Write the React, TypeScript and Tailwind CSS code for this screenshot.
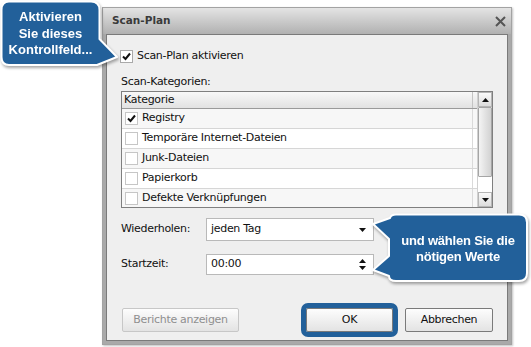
import React from 'react';

const ui = { fontFamily: '"DejaVu Sans", Verdana, sans-serif' };
const tip = { fontFamily: '"Liberation Sans", Arial, sans-serif' };
const blue = '#22609a';

const Check = ({ checked = false, className = '' }: { checked?: boolean; className?: string }) => (
  <div className={`flex h-[13px] w-[13px] shrink-0 items-center justify-center border border-[#a9a9a9] bg-white ${className}`}>
    {checked && (
      <svg width="9" height="9" viewBox="0 0 9 9">
        <path d="M1 4.5 L3.5 7 L8 1.5" fill="none" stroke="#111" strokeWidth="2" />
      </svg>
    )}
  </div>
);

const Arrow = ({ up = false }: { up?: boolean }) => (
  <svg width="7" height="4" viewBox="0 0 7 4">
    <path d={up ? 'M0 4 L3.5 0 L7 4 Z' : 'M0 0 L7 0 L3.5 4 Z'} fill="#111" />
  </svg>
);

const categories = [
  { name: 'Registry', checked: true },
  { name: 'Temporäre Internet-Dateien', checked: false },
  { name: 'Junk-Dateien', checked: false },
  { name: 'Papierkorb', checked: false },
  { name: 'Defekte Verknüpfungen', checked: false },
];

const Button = ({ children, disabled = false, className = '' }: { children: React.ReactNode; disabled?: boolean; className?: string }) => (
  <div
    className={`flex h-[24px] items-center justify-center rounded-[2px] border bg-gradient-to-b from-[#fdfdfd] to-[#e3e3e3] text-[11px] ${
      disabled ? 'border-[#c7c7c7] text-[#8f8f8f]' : 'border-[#7a7a7a] text-[#111]'
    } ${className}`}
  >
    {children}
  </div>
);

export default function App() {
  return (
    <div className="relative h-[347px] w-[531px] overflow-hidden bg-white" style={ui}>
      <div className="ml-[102px] pt-[7px]">
        <div className="flex h-[338px] w-[410px] flex-col border border-[#a3a3a3] bg-[#a9a9a9] shadow-[1px_1px_2px_rgba(0,0,0,0.25)]">
          {/* title bar */}
          <div className="flex h-[26px] items-center justify-between bg-gradient-to-b from-[#e4e4e4] to-[#b1b1b1] pl-[9px] pr-[5px]">
            <span className="text-[10.5px] font-bold text-[#3a3a3a]">Scan-Plan</span>
            <svg width="11" height="11" viewBox="0 0 11 11">
              <path d="M1 1 L10 10 M10 1 L1 10" stroke="#555" strokeWidth="2" />
            </svg>
          </div>

          {/* content */}
          <div className="mx-[3px] mb-[3px] flex flex-1 flex-col border border-[#7a7a7a] bg-[#efefef] pl-[13px] pr-[14px] text-[11px] tracking-[-0.3px] text-[#111]">
            <div className="mt-[15px] flex h-[13px] items-center gap-[4px]">
              <Check checked />
              <span>Scan-Plan aktivieren</span>
            </div>

            <div className="mt-[12px] h-[13px] pl-[1px] leading-[13px]">Scan-Kategorien:</div>

            {/* list */}
            <div className="ml-[1px] mt-[3px] flex h-[117px] w-[372px] border border-[#7f7f7f] bg-white">
              <div className="flex flex-1 flex-col overflow-hidden">
                <div className="flex h-[17px] shrink-0 border-b border-[#9a9a9a] bg-gradient-to-b from-[#f8f8f8] to-[#e2e2e2]">
                  <div className="flex flex-1 items-center border-r border-[#c4c4c4] pl-[2px]">Kategorie</div>
                  <div className="w-[4px]" />
                </div>
                {categories.map((c, i) => (
                  <div
                    key={c.name}
                    className={`flex h-[20px] shrink-0 border-b border-[#d6d6d6] ${i % 2 === 0 ? 'bg-[#f7f7f7]' : 'bg-white'}`}
                  >
                    <div className="flex flex-1 items-center gap-[4px] border-r border-[#dadada] pl-[3px]">
                      <Check checked={c.checked} className="border-[#c6c6c6]" />
                      <span>{c.name}</span>
                    </div>
                    <div className="w-[4px]" />
                  </div>
                ))}
              </div>
              {/* scrollbar */}
              <div className="flex w-[15px] flex-col border-l border-[#d0d0d0] bg-white">
                <div className="flex h-[15px] items-center justify-center border border-[#b5b5b5] bg-gradient-to-b from-[#fafafa] to-[#dcdcdc]">
                  <Arrow up />
                </div>
                <div className="h-[70px] rounded-[1px] border border-[#a5a5a5] bg-gradient-to-r from-[#f4f4f4] to-[#d2d2d2]" />
                <div className="flex-1 bg-white" />
                <div className="flex h-[15px] items-center justify-center border border-[#b5b5b5] bg-gradient-to-b from-[#fafafa] to-[#dcdcdc]">
                  <Arrow />
                </div>
              </div>
            </div>

            <div className="mt-[10px] flex h-[23px] items-center pl-[1px]">
              <span className="w-[85px]">Wiederholen:</span>
              <div className="flex h-[23px] w-[168px] items-center justify-between border border-[#b9b9b9] bg-white pl-[4px] pr-[7px]">
                <span>jeden Tag</span>
                <Arrow />
              </div>
            </div>

            <div className="mt-[13px] flex h-[21px] items-center pl-[1px]">
              <span className="w-[85px]">Startzeit:</span>
              <div className="flex h-[21px] w-[168px] items-center justify-between border border-[#b9b9b9] bg-white pl-[4px] pr-[7px]">
                <span>00:00</span>
                <div className="flex flex-col gap-[3px]">
                  <Arrow up />
                  <Arrow />
                </div>
              </div>
            </div>

            <div className="mt-[33px] flex items-center pl-[2px]">
              <Button disabled className="w-[117px]">Berichte anzeigen</Button>
              <Button className="ml-auto w-[87px] outline-[5px] outline-[#22609a] outline-solid">OK</Button>
              <Button className="ml-[12px] w-[88px]">Abbrechen</Button>
            </div>
          </div>
        </div>
      </div>

      {/* callout 1 */}
      <div className="absolute left-0 top-0 h-[72px] w-[122px] drop-shadow-[1px_2px_1.5px_rgba(0,0,0,0.35)]">
        <svg width="122" height="72" viewBox="0 0 122 72" className="absolute inset-0">
          <path
            d="M9 1.5 H91 Q99.5 1.5 99.5 10 V39 L117 57 L97 65 H9 Q1.5 65 1.5 57 V10 Q1.5 1.5 9 1.5 Z"
            fill={blue}
            stroke="#fff"
            strokeWidth="2"
            strokeLinejoin="round"
          />
        </svg>
        <div
          className="absolute left-[1px] top-[9px] flex w-[99px] flex-col items-center text-[13px] font-bold leading-[16.5px] text-white"
          style={tip}
        >
          <span>Aktivieren</span>
          <span>Sie dieses</span>
          <span>Kontrollfeld...</span>
        </div>
      </div>

      {/* callout 2 */}
      <div className="absolute left-[370px] top-[212px] h-[74px] w-[161px] drop-shadow-[1px_2px_1.5px_rgba(0,0,0,0.35)]">
        <svg width="161" height="74" viewBox="0 0 161 74" className="absolute inset-0">
          <path
            d="M26 2.5 H149 Q157 2.5 157 10.5 V61 Q157 69 149 69 H26 Q19 69 19 64 L3 58 L19 44 V27 L3 12 L20 6 Q21 2.5 26 2.5 Z"
            fill={blue}
            stroke="#fff"
            strokeWidth="2"
            strokeLinejoin="round"
          />
        </svg>
        <div
          className="absolute left-[19px] top-[21px] flex w-[138px] flex-col items-center text-[13px] font-bold leading-[16px] tracking-[-0.2px] text-white"
          style={tip}
        >
          <span>und wählen Sie die</span>
          <span>nötigen Werte</span>
        </div>
      </div>
    </div>
  );
}
